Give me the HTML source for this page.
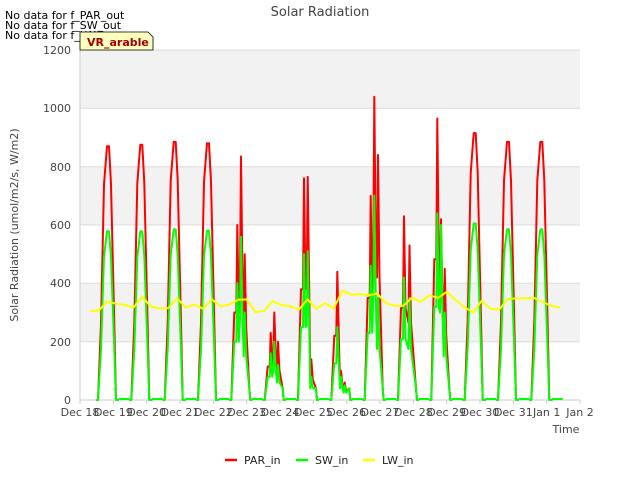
<!DOCTYPE html>
<html><head><meta charset="utf-8"><style>
body{margin:0;background:#fff;width:640px;height:480px;overflow:hidden;font-family:"DejaVu Sans","Liberation Sans",sans-serif}
</style></head><body>
<svg id="s" width="640" height="480" xmlns="http://www.w3.org/2000/svg" font-family="DejaVu Sans, Liberation Sans, sans-serif">
<rect x="80" y="50" width="500" height="350" fill="#fff"/>
<rect x="80" y="50" width="500" height="58.3" fill="#f2f2f2"/>
<rect x="80" y="166.7" width="500" height="58.3" fill="#f2f2f2"/>
<rect x="80" y="283.3" width="500" height="58.3" fill="#f2f2f2"/>
<g stroke="#dcdcdc" stroke-width="1">
<line x1="80" x2="580" y1="108.3" y2="108.3"/><line x1="80" x2="580" y1="166.7" y2="166.7"/>
<line x1="80" x2="580" y1="225" y2="225"/><line x1="80" x2="580" y1="283.3" y2="283.3"/>
<line x1="80" x2="580" y1="341.7" y2="341.7"/><line x1="80" x2="580" y1="50" y2="50"/>
</g>
<line x1="80" x2="580" y1="400" y2="400" stroke="#ccc"/>
<line x1="80" x2="80" y1="50" y2="400" stroke="#ccc"/>
<g id="data"></g>
<g font-size="11" fill="#444" text-anchor="end">
<text x="71" y="404">0</text><text x="71" y="346">200</text><text x="71" y="287">400</text>
<text x="71" y="229">600</text><text x="71" y="171">800</text><text x="71" y="112">1000</text><text x="71" y="54">1200</text>
</g>
<g id="xt" font-size="11" fill="#444" text-anchor="middle"></g>
<text x="566" y="433" font-size="11" fill="#444" text-anchor="middle">Time</text>
<text x="18" y="225" font-size="11" fill="#444" text-anchor="middle" transform="rotate(-90 18 225)">Solar Radiation (umol/m2/s, W/m2)</text>
<text x="320" y="16" font-size="13" fill="#444" text-anchor="middle">Solar Radiation</text>
<g font-size="11" fill="#000">
<text x="5" y="19">No data for f_PAR_out</text><text x="5" y="29">No data for f_SW_out</text><text x="5" y="39">No data for f_LW_out</text>
</g>
<path d="M80,32 H148 L153,37 V50 H80 Z" fill="#ffffc0" stroke="#000" stroke-width="0.8"/>
<text x="87" y="46" font-size="11" font-weight="bold" fill="#a00000">VR_arable</text>
<line x1="225" x2="237" y1="460" y2="460" stroke="#f00" stroke-width="2.5"/><text x="244" y="464" font-size="11" fill="#222">PAR_in</text>
<line x1="296" x2="308" y1="460" y2="460" stroke="#0f0" stroke-width="2.5"/><text x="315" y="464" font-size="11" fill="#222">SW_in</text>
<line x1="363" x2="375" y1="460" y2="460" stroke="#ff0" stroke-width="2.5"/><text x="382" y="464" font-size="11" fill="#222">LW_in</text>
</svg>
<script>
var ns="http://www.w3.org/2000/svg",g=document.getElementById("data"),xt=document.getElementById("xt");
function Y(v){return 400-v*350/1200}
var labs=["Dec 18","Dec 19","Dec 20","Dec 21","Dec 22","Dec 23","Dec 24","Dec 25","Dec 26","Dec 27","Dec 28","Dec 29","Dec 30","Dec 31","Jan 1","Jan 2"];
for(var i=0;i<16;i++){var x=80+i*500/15;var t=document.createElementNS(ns,"text");t.setAttribute("x",x);t.setAttribute("y",416);t.textContent=labs[i];xt.appendChild(t);
var l=document.createElementNS(ns,"line");l.setAttribute("x1",x);l.setAttribute("x2",x);l.setAttribute("y1",400);l.setAttribute("y2",404);l.setAttribute("stroke","#ccc");g.appendChild(l);}
var par=[[870],[875],[885],[880],[600,835,500],[230,300,200],[760,765,140],[440,100,60],[700,1040,840],[630,530],[965,620,450],[915],[885],[885]];
var sw=[[578],[578],[585],[580],[400,560,300],[160,200,120],[500,510,80],[250,80,50],[460,700,350],[420,350],[640,600,300],[605],[585],[585]];
function day(vals,c){var p=[[c-13,400],[c-11,400]];var n=vals.length;
 if(n==1){var v=vals[0];p.push([c-8,Y(v*0.3)],[c-5,Y(v*0.85)],[c-2,Y(v)],[c,Y(v)],[c+2,Y(v*0.85)],[c+5,Y(v*0.35)],[c+7,Y(0)]);}
 else{p.push([c-8,Y(vals[0]*0.5)]);for(var k=0;k<n;k++){var x=c-6+k*11/n;p.push([x,Y(vals[k]*0.5)],[x+1,Y(vals[k])],[x+2.5,Y(vals[k]*0.5)]);}p.push([c+7,Y(40)],[c+8,400]);}
 p.push([c+10,400]);return p}
function draw(data,col){var d="";for(var i=0;i<14;i++){var c=80+i*500/15+29;var p=day(data[i],c);d+="M"+p.map(function(q){return q[0].toFixed(1)+","+q[1].toFixed(1)}).join(" L");
 d+=" M"+(c+10)+",399 L"+(c+33.3-13)+",399 ";}
var e=document.createElementNS(ns,"path");e.setAttribute("d",d);e.setAttribute("fill","none");e.setAttribute("stroke",col);e.setAttribute("stroke-width","2");e.setAttribute("stroke-linejoin","round");g.appendChild(e);}
draw(par,"#f00");draw(sw,"#0f0");
var lw=[310,305,340,325,325,320,350,320,318,312,350,322,325,315,340,320,330,340,345,305,303,340,330,320,312,340,312,335,310,375,365,360,360,370,330,325,318,350,340,355,350,375,340,320,305,338,315,305,345,352,345,350,340,320,318];
var d="";for(var i=0;i<lw.length;i++){var x=90+i*470/(lw.length-1);d+=(i?"L":"M")+x.toFixed(1)+","+Y(lw[i]+((i*7)%11-5)).toFixed(1)+" ";}
var e=document.createElementNS(ns,"path");e.setAttribute("d",d);e.setAttribute("fill","none");e.setAttribute("stroke","#ff0");e.setAttribute("stroke-width","2");g.appendChild(e);
</script>
</body></html>
